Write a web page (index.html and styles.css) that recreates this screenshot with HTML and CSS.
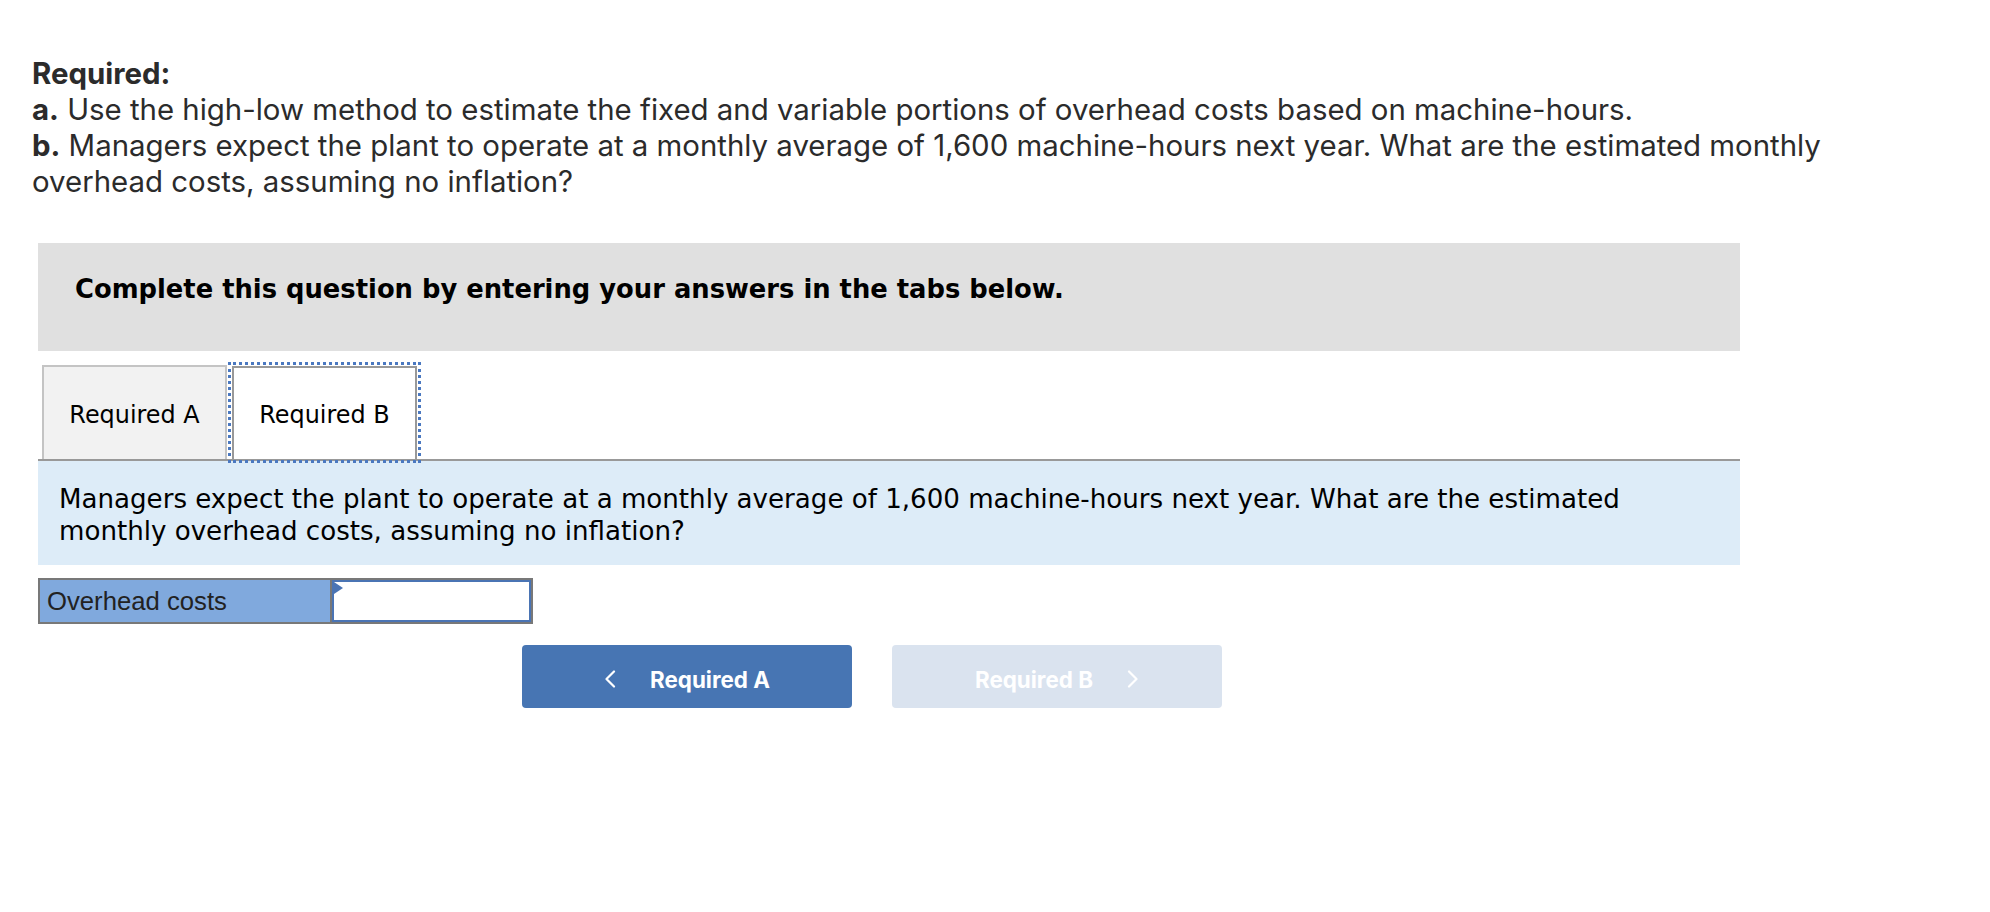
FILE: index.html
```html
<!DOCTYPE html>
<html lang="en">
<head>
<meta charset="utf-8">
<title>Required</title>
<link rel="stylesheet" href="styles.css">
</head>
<body>
<div class="req">
  <p class="req-title">Required:</p>
  <p><b>a.</b> Use the high-low method to estimate the fixed and variable portions of overhead costs based on machine-hours.</p>
  <p><b>b.</b> Managers expect the plant to operate at a monthly average of 1,600 machine-hours next year. What are the estimated monthly overhead costs, assuming no inflation?</p>
</div>
<div class="panel">
  <div class="instructions">Complete this question by entering your answers in the tabs below.</div>
  <div class="tabs">
    <div class="tab">Required A</div>
    <div class="tab active">Required B</div>
  </div>
  <div class="question">Managers expect the plant to operate at a monthly average of 1,600 machine-hours next year. What are the estimated monthly overhead costs, assuming no inflation?</div>
  <div class="answer">
    <div class="answer-label">Overhead costs</div>
    <div class="answer-input"><span class="flag"></span></div>
  </div>
  <div class="nav">
    <button class="nav-btn prev"><svg class="chev" viewBox="0 0 12 18" width="12" height="18"><polyline points="10,1.5 2.5,9 10,16.5"/></svg><span>Required A</span></button>
    <button class="nav-btn next"><span>Required B</span><svg class="chev" viewBox="0 0 12 18" width="12" height="18"><polyline points="2,1.5 9.5,9 2,16.5"/></svg></button>
  </div>
</div>
</body>
</html>
```
FILE: styles.css
```css
html, body { margin: 0; padding: 0; background: #fff; }
.req {
  padding: 56px 100px 0 32px;
  font-family: "Inter", "Open Sans", sans-serif;
  font-size: 29.4px;
  line-height: 36px;
  color: #2b2b2b;
}
.req p { margin: 0; }
.req b { font-weight: 700; }
.req-title { font-weight: 700; }
.panel { margin: 43px 0 0 38px; width: 1702px; }
.instructions {
  box-sizing: border-box;
  height: 108px;
  padding: 32px 37px 0;
  background: #e0e0e0;
  font-family: "DejaVu Sans", sans-serif;
  font-weight: 700;
  font-size: 25.8px;
  line-height: 28px;
  color: #000;
}
.tabs {
  display: flex;
  align-items: flex-end;
  gap: 5px;
  padding: 14px 0 0 4px;
  border-bottom: 2px solid #999;
}
.tab {
  box-sizing: border-box;
  width: 185px;
  height: 94px;
  padding-top: 4px;
  border: 2px solid #c4c4c4;
  border-bottom: none;
  background: #f2f2f2;
  display: flex;
  align-items: center;
  justify-content: center;
  font-family: "DejaVu Sans", sans-serif;
  font-size: 23.9px;
  color: #000;
}
.tab.active {
  height: 93px;
  padding-top: 3px;
  background: #fff;
  border-color: #999;
  outline: 3px dotted #4a78c0;
  outline-offset: 1px;
}
.question {
  padding: 22px 21px 18px;
  background: #ddecf8;
  font-family: "DejaVu Sans", sans-serif;
  font-size: 26.1px;
  line-height: 32px;
  color: #000;
}
.answer {
  display: flex;
  box-sizing: border-box;
  width: 495px;
  height: 46px;
  margin-top: 13px;
  border: 2px solid #787878;
}
.answer-label {
  width: 292px;
  padding-left: 7px;
  box-sizing: border-box;
  display: flex;
  align-items: center;
  background: #80a9dd;
  border-right: 2px solid #787878;
  font-family: "Liberation Sans", Arial, sans-serif;
  font-size: 25.7px;
  color: #222;
}
.answer-input {
  flex: 1;
  position: relative;
  background: #fff;
  border: 2px solid #4a74b4;
}
.flag {
  position: absolute;
  top: 0;
  left: 0;
  width: 0;
  height: 0;
  border-left: 9px solid #4a74b4;
  border-top: 6px solid transparent;
  border-bottom: 6px solid transparent;
}
.nav {
  display: flex;
  gap: 40px;
  margin-top: 21px;
  padding-left: 484px;
}
.nav-btn {
  box-sizing: border-box;
  width: 330px;
  height: 63px;
  border: none;
  border-radius: 4px;
  display: flex;
  align-items: center;
  justify-content: center;
  gap: 34px;
  padding: 5px 0 0;
  font-family: "Inter", sans-serif;
  font-weight: 700;
  font-size: 22.4px;
  color: #fff;
}
.nav-btn.prev { background: #4775b3; }
.nav-btn.next { background: #dae3ef; }
.chev { fill: none; stroke: #fff; stroke-width: 2.2; stroke-linecap: round; stroke-linejoin: round; }
```
